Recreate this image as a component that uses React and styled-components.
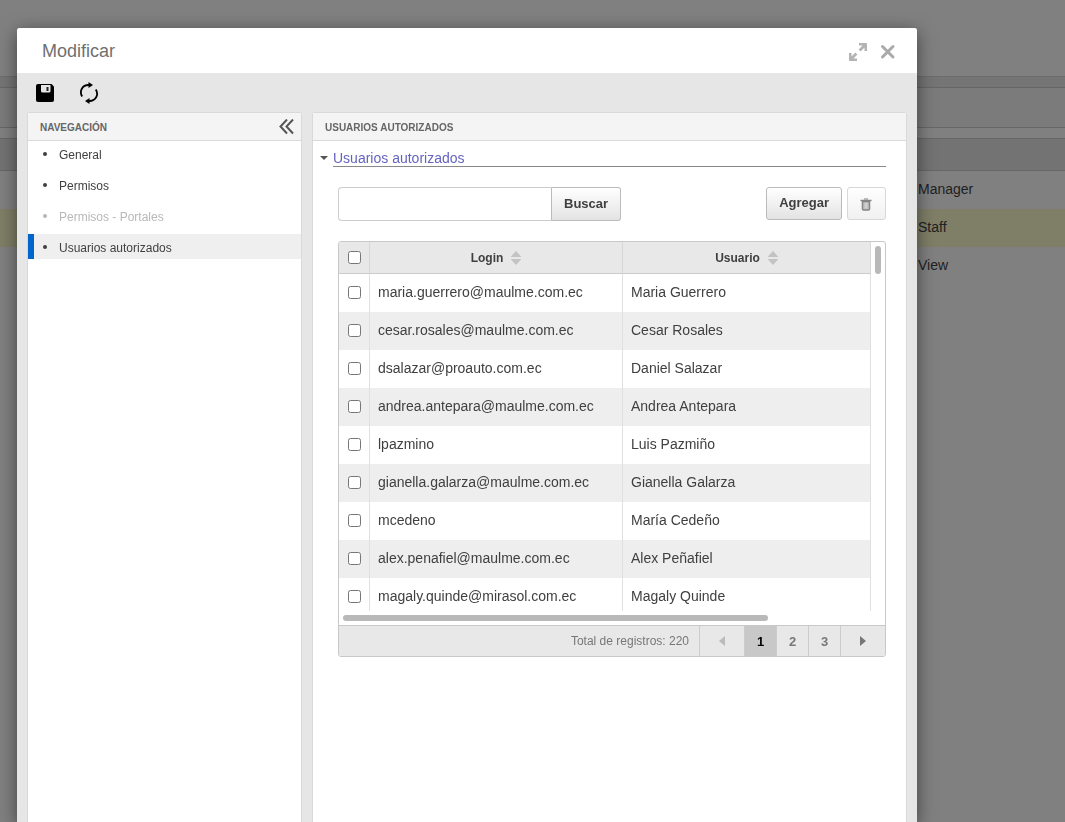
import React, { useState } from 'react'
import styled, { createGlobalStyle, css } from 'styled-components'

const users = [
    { login: 'maria.guerrero@maulme.com.ec', name: 'Maria Guerrero' },
    { login: 'cesar.rosales@maulme.com.ec', name: 'Cesar Rosales' },
    { login: 'dsalazar@proauto.com.ec', name: 'Daniel Salazar' },
    { login: 'andrea.antepara@maulme.com.ec', name: 'Andrea Antepara' },
    { login: 'lpazmino', name: 'Luis Pazmiño' },
    { login: 'gianella.galarza@maulme.com.ec', name: 'Gianella Galarza' },
    { login: 'mcedeno', name: 'María Cedeño' },
    { login: 'alex.penafiel@maulme.com.ec', name: 'Alex Peñafiel' },
    { login: 'magaly.quinde@mirasol.com.ec', name: 'Magaly Quinde' },
]

const sections = [
    { label: 'General' },
    { label: 'Permisos' },
    { label: 'Permisos - Portales', disabled: true },
    { label: 'Usuarios autorizados' },
]

const roles = ['Manager', 'Staff', 'View']

const SortIcon = () => (
    <svg width="10" height="14" viewBox="0 0 10 14" fill="#c3c3c3">
        <path d="M5 0L10 5.5V6H0V5.5zM5 14L10 8.5V8H0V8.5z" />
    </svg>
)

const App = () => {
    const [section, setSection] = useState('Usuarios autorizados')
    const [page, setPage] = useState(1)

    return (
        <>
            <GlobalStyle />
            <Backdrop>
                <TopArea />
                <Strip />
                <ToolArea />
                <Spacer />
                <RolesTable>
                    <thead>
                        <tr><RoleHead /><RoleHead $role /></tr>
                    </thead>
                    <tbody>
                        {roles.map((role) => (
                            <RoleRow key={role} $selected={role === 'Staff'}>
                                <td />
                                <td>{role}</td>
                            </RoleRow>
                        ))}
                    </tbody>
                </RolesTable>
            </Backdrop>
            <Overlay>
                <Modal role="dialog" aria-labelledby="modal-title">
                    <ModalHeader>
                        <ModalTitle id="modal-title">Modificar</ModalTitle>
                        <IconButton aria-label="Maximizar">
                            <svg width="18" height="18" viewBox="0 0 18 18" fill="#b3b3b3">
                                <path d="M10 0H17Q18 0 18 1V8H15.500V4.500L11.600 8.400L9.600 6.400L13.500 2.500H10z" />
                                <path d="M0 10H2.500V13.500L6.400 9.600L8.400 11.600L4.500 15.500H8V18H1Q0 18 0 17z" />
                            </svg>
                        </IconButton>
                        <IconButton aria-label="Cerrar">
                            <svg width="16" height="16" viewBox="0 0 16 16" stroke="#aaa" strokeWidth="3" strokeLinecap="round">
                                <path d="M2.500 2.500L13 13M13 2.500L2.500 13" />
                            </svg>
                        </IconButton>
                    </ModalHeader>
                    <Toolbar>
                        <IconButton aria-label="Guardar">
                            <svg width="18" height="18" viewBox="0 0 18 18">
                                <path d="M2 0H15.500L18 2.500V16Q18 18 16 18H2Q0 18 0 16V2Q0 0 2 0z" />
                                <path d="M5 1H14.500V7Q14.500 8.500 13 8.500H6.500Q5 8.500 5 7z" fill="#e6e6e6" />
                                <path d="M10.500 3H12.500V7H10.500z" fill="#222" />
                            </svg>
                        </IconButton>
                        <IconButton aria-label="Actualizar">
                            <svg width="20" height="22" viewBox="0 0 20 22">
                                <g fill="none" stroke="#000" strokeWidth="1.800">
                                    <path d="M3.200 14.500C-.2 9 3.500 3 9.500 3H11" />
                                    <path d="M16.800 7.500C20.200 13 16.500 19 10.500 19H9" />
                                </g>
                                <path d="M9.500 0L14 3L9.500 6zM10.500 16L6 19L10.500 22z" />
                            </svg>
                        </IconButton>
                    </Toolbar>
                    <Panels>
                        <Panel>
                            <PanelHeader>
                                <PanelTitle>NAVEGACIÓN</PanelTitle>
                                <IconButton aria-label="Contraer">
                                    <svg width="16" height="16" viewBox="0 0 16 16" fill="none" stroke="#555" strokeWidth="2">
                                        <path d="M9 .5L2.500 7.500L9 14.500M15 .5L8.500 7.500L15 14.500" />
                                    </svg>
                                </IconButton>
                            </PanelHeader>
                            <NavList>
                                {sections.map(({ label, disabled }) => (
                                    <li key={label}>
                                        <NavItem
                                            disabled={disabled}
                                            $active={section === label}
                                            onClick={() => setSection(label)}
                                        >
                                            {label}
                                        </NavItem>
                                    </li>
                                ))}
                            </NavList>
                        </Panel>
                        <Panel>
                            <PanelHeader>
                                <PanelTitle>USUARIOS AUTORIZADOS</PanelTitle>
                            </PanelHeader>
                            <SectionBody>
                                <SectionTitle>
                                    <svg width="8" height="4" viewBox="0 0 8 4" fill="#555">
                                        <path d="M0 0H8L4 4z" />
                                    </svg>
                                    <a href="#usuarios">Usuarios autorizados</a>
                                </SectionTitle>
                                <SectionContent>
                                    <Controls>
                                        <SearchInput type="text" aria-label="Buscar usuario" />
                                        <SearchButton>Buscar</SearchButton>
                                        <Button>Agregar</Button>
                                        <DeleteButton disabled aria-label="Eliminar">
                                            <svg width="12" height="13" viewBox="0 0 12 13" fill="none" stroke="#858585">
                                                <path d="M4 1H8" strokeWidth="1" />
                                                <path d="M.5 2.500H11.500" strokeWidth="1.500" />
                                                <path d="M2.500 3.500V11Q2.500 12 3.500 12H8.500Q9.500 12 9.500 11V3.500z" fill="#c4c4c4" strokeWidth="1.500" />
                                                <path d="M6 5V10" stroke="#ddd" />
                                            </svg>
                                        </DeleteButton>
                                    </Controls>
                                    <Grid>
                                        <GridMain>
                                            <GridView>
                                                <UsersTable>
                                                    <colgroup>
                                                        <CheckCol />
                                                        <LoginCol />
                                                        <col />
                                                    </colgroup>
                                                    <thead>
                                                        <tr>
                                                            <HeadCell><input type="checkbox" aria-label="Seleccionar todos" /></HeadCell>
                                                            <HeadCell><Sortable>Login <SortIcon /></Sortable></HeadCell>
                                                            <HeadCell><Sortable>Usuario <SortIcon /></Sortable></HeadCell>
                                                        </tr>
                                                    </thead>
                                                    <tbody>
                                                        {users.map((user) => (
                                                            <UserRow key={user.login}>
                                                                <CheckCell><input type="checkbox" aria-label={user.name} /></CheckCell>
                                                                <Cell>{user.login}</Cell>
                                                                <Cell>{user.name}</Cell>
                                                            </UserRow>
                                                        ))}
                                                    </tbody>
                                                </UsersTable>
                                            </GridView>
                                            <VerticalTrack><VerticalThumb /></VerticalTrack>
                                        </GridMain>
                                        <HorizontalTrack><HorizontalThumb /></HorizontalTrack>
                                        <GridFooter>
                                            <Total>Total de registros: 220</Total>
                                            <PageButton $wide disabled aria-label="Anterior">
                                                <svg width="6" height="10" viewBox="0 0 6 10" fill="#bbb"><path d="M6 0V10L0 5z" /></svg>
                                            </PageButton>
                                            {[1, 2, 3].map((n) => (
                                                <PageButton key={n} $current={n === page} onClick={() => setPage(n)}>{n}</PageButton>
                                            ))}
                                            <PageButton $wide aria-label="Siguiente">
                                                <svg width="6" height="10" viewBox="0 0 6 10" fill="#777"><path d="M0 0V10L6 5z" /></svg>
                                            </PageButton>
                                        </GridFooter>
                                    </Grid>
                                </SectionContent>
                            </SectionBody>
                        </Panel>
                    </Panels>
                </Modal>
            </Overlay>
        </>
    )
}

export default App

const GlobalStyle = createGlobalStyle`
    * {
        box-sizing: border-box;
    }

    body {
        margin: 0;
        background: #808080;
        font-family: "Liberation Sans", Arial, sans-serif;
        font-size: 14px;
        color: #404040;
        overflow: hidden;
    }

    button, input {
        font-family: inherit;
        margin: 0;
    }

    svg {
        display: block;
        flex: none;
    }
`;

const Backdrop = styled.div`
    min-height: 100vh;
`;

const TopArea = styled.div`
    height: 76px;
`;

const Strip = styled.div`
    height: 12px;
    background: #757575;
    border-top: 1px solid #6c6c6c;
    border-bottom: 1px solid #666;
`;

const ToolArea = styled.div`
    height: 40px;
    background: #7b7b7b;
    border-bottom: 1px solid #666;
`;

const Spacer = styled.div`
    height: 10px;
`;

const RolesTable = styled.table`
    width: 100%;
    border-collapse: separate;
    border-spacing: 0;
    table-layout: fixed;
`;

const RoleHead = styled.th`
    height: 33px;
    padding: 0;
    background: #737373;
    border-top: 1px solid #666;
    border-bottom: 1px solid #666;
    width: ${({ $role }) => ($role ? '148px' : 'auto')};
`;

const RoleRow = styled.tr`
    height: 38px;
    color: #202020;
    background: ${({ $selected }) => ($selected ? '#7f7f68' : 'none')};

    & > td {
        padding: 0 1px 2px;
    }
`;

const Overlay = styled.div`
    position: fixed;
    inset: 0;
    display: flex;
    padding: 28px 148px 0 17px;
`;

const Modal = styled.div`
    flex: 1;
    display: flex;
    flex-direction: column;
    background: #e6e6e6;
    border-radius: 3px 3px 0 0;
    box-shadow: 0 4px 18px rgba(0, 0, 0, .5);
`;

const ModalHeader = styled.header`
    display: flex;
    align-items: center;
    gap: 13px;
    height: 45px;
    padding: 2px 21px 0 25px;
    background: #fff;
    border-radius: 3px 3px 0 0;
`;

const ModalTitle = styled.h1`
    flex: 1;
    margin: 0;
    font-size: 18px;
    font-weight: normal;
    color: #707070;
`;

const IconButton = styled.button`
    padding: 0;
    border: none;
    background: none;
    cursor: pointer;
`;

const Toolbar = styled.div`
    display: flex;
    align-items: center;
    gap: 25px;
    height: 39px;
    padding: 0 19px;
`;

const Panels = styled.div`
    flex: 1;
    display: grid;
    grid-template-columns: 275px 1fr;
    gap: 10px;
    padding: 0 10px;
`;

const Panel = styled.section`
    background: #fff;
    border: 1px solid #d9d9d9;
    border-bottom: none;
    border-radius: 3px 3px 0 0;
`;

const PanelHeader = styled.div`
    display: flex;
    align-items: center;
    justify-content: space-between;
    height: 28px;
    padding: 0 7px 0 12px;
    background: #f4f4f4;
    border-bottom: 1px solid #d9d9d9;
`;

const PanelTitle = styled.h2`
    margin: 0;
    padding-top: 2px;
    font-size: 10px;
    color: #666;
`;

const NavList = styled.ul`
    display: flex;
    flex-direction: column;
    gap: 6px;
    margin: 0;
    padding: 0;
    list-style: none;
`;

const NavItem = styled.button`
    display: flex;
    align-items: center;
    width: 100%;
    height: 25px;
    padding: 2px 0 0 9px;
    border: none;
    border-left: 6px solid transparent;
    background: none;
    color: #404040;
    font-size: 12px;
    cursor: pointer;

    &::before {
        content: '';
        width: 4px;
        height: 4px;
        margin: 0 12px 2px 0;
        border-radius: 50%;
        background: currentColor;
    }

    &:disabled {
        color: #b8b8b8;
    }

    ${({ $active }) => $active && css`
        background: #efefef;
        border-left-color: #06c;
    `}
`;

const SectionBody = styled.div`
    padding: 0 20px 0 7px;
`;

const SectionTitle = styled.div`
    display: flex;
    align-items: center;
    gap: 5px;
    height: 26px;

    & > svg {
        margin-top: 8px;
    }

    & > a {
        flex: 1;
        height: 26px;
        padding-top: 1px;
        line-height: 32px;
        border-bottom: 1px solid #888;
        color: #6464c0;
        text-decoration: none;
    }
`;

const SectionContent = styled.div`
    padding: 20px 0 0 18px;
`;

const Controls = styled.div`
    display: flex;
    align-items: flex-start;
    margin-bottom: 20px;
`;

const SearchInput = styled.input`
    width: 214px;
    height: 34px;
    padding: 0 8px;
    border: 1px solid #ccc;
    border-right-color: #bbb;
    border-radius: 4px 0 0 4px;
    font-size: 14px;
`;

const Button = styled.button`
    height: 33px;
    padding: 0 12px 2px;
    border: 1px solid #bbb;
    border-radius: 3px;
    background: linear-gradient(#fff, #e3e3e3);
    color: #404040;
    font-size: 13px;
    font-weight: bold;
    cursor: pointer;
`;

const SearchButton = styled(Button)`
    height: 34px;
    margin-right: auto;
    border-left: none;
    border-radius: 0 3px 3px 0;
`;

const DeleteButton = styled(Button)`
    display: grid;
    place-items: center;
    width: 39px;
    margin-left: 5px;
    padding: 1px 1px 0 0;
    border-color: #d8d8d8;
    background: linear-gradient(#fff, #f0f0f0);
    cursor: default;
`;

const Grid = styled.div`
    border: 1px solid #c8c8c8;
    border-radius: 3px;
    overflow: hidden;
`;

const GridMain = styled.div`
    display: flex;
`;

const GridView = styled.div`
    flex: 1;
    height: 369px;
    overflow: hidden;
`;

const UsersTable = styled.table`
    width: 100%;
    border-collapse: separate;
    border-spacing: 0;
    table-layout: fixed;
`;

const CheckCol = styled.col`
    width: 31px;
`;

const LoginCol = styled.col`
    width: 253px;
`;

const HeadCell = styled.th`
    height: 32px;
    padding: 0;
    background: #e8e8e8;
    border-right: 1px solid #d8d8d8;
    border-bottom: 1px solid #ccc;
    font-size: 12px;

    & > input {
        display: block;
        margin: 0 auto;
    }
`;

const Sortable = styled.div`
    display: flex;
    align-items: center;
    justify-content: center;
    gap: 8px;
`;

const Cell = styled.td`
    height: 38px;
    padding: 0 8px 2px;
    border-right: 1px solid #e0e0e0;
    white-space: nowrap;
`;

const CheckCell = styled(Cell)`
    padding: 0 0 2px;

    & > input {
        display: block;
        margin: 0 auto;
    }
`;

const UserRow = styled.tr`
    &:nth-child(even) {
        background: #eee;
    }
`;

const VerticalTrack = styled.div`
    width: 14px;
    padding: 4px;
`;

const VerticalThumb = styled.div`
    height: 28px;
    border-radius: 3px;
    background: #b9b9b9;
`;

const HorizontalTrack = styled.div`
    height: 14px;
    padding: 4px;
`;

const HorizontalThumb = styled.div`
    width: 79%;
    height: 6px;
    border-radius: 3px;
    background: #b9b9b9;
`;

const GridFooter = styled.div`
    display: flex;
    align-items: stretch;
    height: 31px;
    background: #e8e8e8;
    border-top: 1px solid #c8c8c8;
`;

const Total = styled.div`
    flex: 1;
    padding-right: 10px;
    line-height: 30px;
    text-align: right;
    font-size: 12px;
    color: #777;
`;

const PageButton = styled.button`
    display: grid;
    place-items: center;
    width: ${({ $wide }) => ($wide ? '45px' : '32px')};
    padding: 0;
    border: none;
    border-left: 1px solid #ccc;
    background: ${({ $current }) => ($current ? '#c8c8c8' : 'none')};
    color: ${({ $current }) => ($current ? '#000' : '#777')};
    font-size: 13px;
    font-weight: bold;
    cursor: pointer;
`;
